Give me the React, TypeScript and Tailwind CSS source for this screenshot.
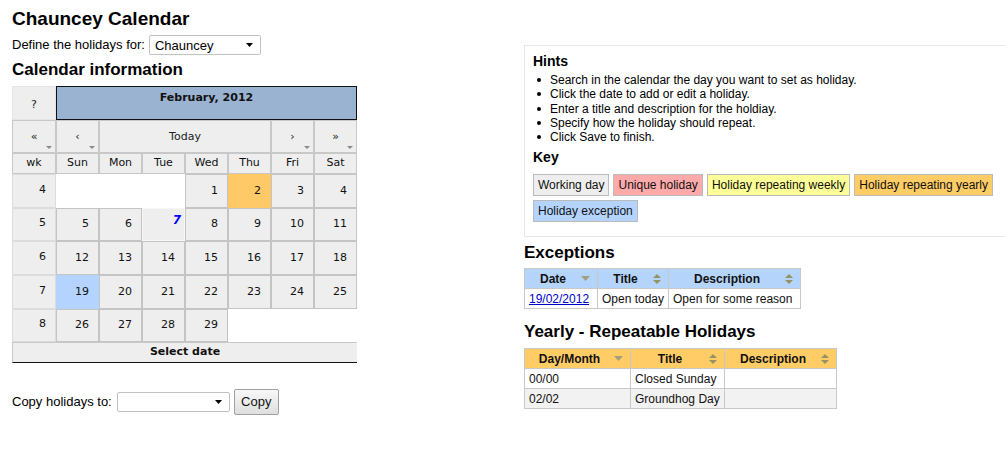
import React from 'react';

const sans = 'font-["Liberation_Sans",Arial,sans-serif]';

function FakeSelect({ value, width }: { value: string; width: string }) {
  return (
    <div className={`${width} h-[20px] border border-[#c2c2c2] rounded-[2px] bg-white flex items-center pl-[5px] pr-[7px]`}>
      <span className="flex-1 text-[13px] leading-none text-black">{value}</span>
      <svg width="7" height="4" viewBox="0 0 7 4">
        <path d="M0 0h7L3.5 4z" fill="#000" />
      </svg>
    </div>
  );
}

function NavCell({ label, span }: { label: string; span?: boolean }) {
  return (
    <div
      className={`relative bg-[#eeeeee] border border-[#c8c8c8] flex items-center justify-center pt-[2px] text-[11px] text-[#222] ${
        span ? 'col-span-4' : ''
      }`}
    >
      {label}
      {!span && (
        <svg className="absolute right-[3px] bottom-[3px]" width="6" height="3" viewBox="0 0 6 3">
          <path d="M0 0h6L3 3z" fill="#8a8a8a" />
        </svg>
      )}
    </div>
  );
}

type Day = { n?: number; kind?: 'plain' | 'yearly' | 'exception' | 'today' };

function DayCell({ d }: { d: Day }) {
  if (!d.n) return <div className="bg-white" />;
  if (d.kind === 'today') {
    return (
      <div className="bg-[#eeeeee] border border-[#f7f7f7] flex items-start justify-end pt-[2px] pr-[3px] text-[12px] font-bold italic text-[#0000ff]">
        {d.n}
      </div>
    );
  }
  const bg = d.kind === 'yearly' ? 'bg-[#fec966] border-[#fec966]' : d.kind === 'exception' ? 'bg-[#b4d4ff] border-[#b4d4ff]' : 'bg-[#eeeeee] border-[#c4c4c4]';
  return (
    <div className={`${bg} border flex items-center justify-end pr-[9px] text-[11px] text-[#111]`}>
      {d.n}
    </div>
  );
}

function Calendar() {
  const weeks: { wk: number; days: Day[] }[] = [
    { wk: 4, days: [{}, {}, {}, { n: 1 }, { n: 2, kind: 'yearly' }, { n: 3 }, { n: 4 }] },
    { wk: 5, days: [{ n: 5 }, { n: 6 }, { n: 7, kind: 'today' }, { n: 8 }, { n: 9 }, { n: 10 }, { n: 11 }] },
    { wk: 6, days: [{ n: 12 }, { n: 13 }, { n: 14 }, { n: 15 }, { n: 16 }, { n: 17 }, { n: 18 }] },
    { wk: 7, days: [{ n: 19, kind: 'exception' }, { n: 20 }, { n: 21 }, { n: 22 }, { n: 23 }, { n: 24 }, { n: 25 }] },
    { wk: 8, days: [{ n: 26 }, { n: 27 }, { n: 28 }, { n: 29 }, {}, {}, {}] },
  ];
  const names = ['Sun', 'Mon', 'Tue', 'Wed', 'Thu', 'Fri', 'Sat'];

  return (
    <div
      className={`mt-[6px] w-[346px] grid grid-cols-[44px_repeat(7,43px)] grid-rows-[34px_33px_21px_34px_33px_34px_34px_33px_21px] font-["DejaVu_Sans",Verdana,sans-serif]`}
    >
      <div className="bg-[#eeeeee] border border-[#e4e4e4] flex items-center justify-center pt-[4px] text-[11px] text-[#222]">?</div>
      <div className="col-span-7 bg-[#99b3d1] border border-[#111] flex justify-center pt-[3px] text-[11px] font-bold text-[#111]">
        February, 2012
      </div>

      <NavCell label="«" />
      <NavCell label="‹" />
      <NavCell label="Today" span />
      <NavCell label="›" />
      <NavCell label="»" />

      <div className="bg-[#eeeeee] border border-[#c8c8c8] flex items-center justify-center text-[11px] text-[#111]">wk</div>
      {names.map((n) => (
        <div key={n} className="bg-[#eeeeee] border border-[#c8c8c8] flex items-center justify-center text-[11px] text-[#111]">
          {n}
        </div>
      ))}

      {weeks.map((w) => (
        <React.Fragment key={w.wk}>
          <div className="bg-[#eeeeee] border border-[#dcdcdc] flex items-center justify-end pr-[9px] pb-[2px] text-[11px] text-[#111]">
            {w.wk}
          </div>
          {w.days.map((d, i) => (
            <DayCell key={i} d={d} />
          ))}
        </React.Fragment>
      ))}

      <div className="col-span-8 bg-[#eeeeee] border-l border-t border-[#c8c8c8] border-b border-b-[#111] flex items-center justify-center text-[11px] font-bold text-[#111]">
        Select date
      </div>
    </div>
  );
}

function SortDown() {
  return (
    <svg width="9" height="5" viewBox="0 0 9 5">
      <path d="M0 0h9L4.5 5z" fill="#a3a07c" />
    </svg>
  );
}

function SortBoth() {
  return (
    <svg width="8" height="10" viewBox="0 0 8 10">
      <path d="M0 4h8L4 0z M0 6h8L4 10z" fill="#959265" />
    </svg>
  );
}

function Th({ label, down, bg }: { label: string; down?: boolean; bg: string }) {
  return (
    <div className={`${bg} border-r border-b border-[#c8c8c8] flex items-center pr-[7px] text-[12px] font-bold text-[#111]`}>
      <span className="flex-1 text-center">{label}</span>
      {down ? <SortDown /> : <SortBoth />}
    </div>
  );
}

function Td({ children, bg = 'bg-white' }: { children?: React.ReactNode; bg?: string }) {
  return (
    <div className={`${bg} border-r border-b border-[#c8c8c8] flex items-center px-[4px] text-[12px] text-[#111] whitespace-nowrap`}>
      {children}
    </div>
  );
}

const keys = [
  { label: 'Working day', bg: 'bg-[#eeeeee]' },
  { label: 'Unique holiday', bg: 'bg-[#ffaaaa]' },
  { label: 'Holiday repeating weekly', bg: 'bg-[#ffff99]' },
  { label: 'Holiday repeating yearly', bg: 'bg-[#ffcc66]' },
  { label: 'Holiday exception', bg: 'bg-[#b4d4ff]' },
];

const hints = [
  'Search in the calendar the day you want to set as holiday.',
  'Click the date to add or edit a holiday.',
  'Enter a title and description for the holdiay.',
  'Specify how the holiday should repeat.',
  'Click Save to finish.',
];

export default function App() {
  return (
    <div className={`${sans} w-[1005px] h-[463px] bg-white text-black flex overflow-hidden`}>
      <div className="w-[524px] shrink-0 pl-[12px] flex flex-col">
        <h1 className="mt-[8px] text-[19px] leading-[22px] font-bold">Chauncey Calendar</h1>
        <div className="mt-[5px] flex items-center gap-[4px] text-[13px]">
          <span>Define the holidays for:</span>
          <FakeSelect value="Chauncey" width="w-[112px]" />
        </div>
        <h2 className="mt-[5px] text-[17px] leading-[20px] font-bold">Calendar information</h2>
        <Calendar />
        <div className="mt-[26px] h-[26px] flex items-center text-[13px]">
          <span>Copy holidays to:</span>
          <div className="ml-[5px]">
            <FakeSelect value="" width="w-[113px]" />
          </div>
          <button className="ml-[4px] h-[26px] w-[45px] border border-[#a0a0a0] rounded-[2px] bg-gradient-to-b from-[#f8f8f8] to-[#dedede] text-[13px] text-[#111]">
            Copy
          </button>
        </div>
      </div>

      <div className="flex-1 min-w-0 pt-[45px]">
        <div className="w-[500px] border border-[#e6e6e6] pl-[8px] pt-[6px] pb-[14px]">
          <div className="text-[14px] leading-[18px] font-bold">Hints</div>
          <ul className="mt-[3px] text-[12px] leading-[14.3px]">
            {hints.map((h) => (
              <li key={h} className="flex items-center">
                <span className="w-[4px] h-[4px] rounded-full bg-black ml-[4px] mr-[9px]" />
                {h}
              </li>
            ))}
          </ul>
          <div className="mt-[4px] text-[14px] leading-[18px] font-bold">Key</div>
          <div className="mt-[8px] w-[465px] flex flex-wrap gap-x-[4px] gap-y-[4px]">
            {keys.map((k) => (
              <div key={k.label} className={`${k.bg} h-[22px] border border-[#bbbbbb] px-[4px] flex items-center text-[12px] text-[#111]`}>
                {k.label}
              </div>
            ))}
          </div>
        </div>

        <h2 className="mt-[6px] text-[17px] leading-[20px] font-bold">Exceptions</h2>
        <div className="mt-[5px] w-[277px] grid grid-cols-[73px_71px_132px] grid-rows-[20px_20px] border-l border-t border-[#c8c8c8]">
          <Th label="Date" down bg="bg-[#b4d4fc]" />
          <Th label="Title" bg="bg-[#b4d4fc]" />
          <Th label="Description" bg="bg-[#b4d4fc]" />
          <Td>
            <a href="#" className="text-[#0000cc] underline">19/02/2012</a>
          </Td>
          <Td>Open today</Td>
          <Td>Open for some reason</Td>
        </div>

        <h2 className="mt-[13px] text-[17px] leading-[20px] font-bold">Yearly - Repeatable Holidays</h2>
        <div className="mt-[6px] w-[313px] grid grid-cols-[106px_94px_112px] grid-rows-[20px_20px_20px] border-l border-t border-[#c8c8c8]">
          <Th label="Day/Month" down bg="bg-[#ffcc66]" />
          <Th label="Title" bg="bg-[#ffcc66]" />
          <Th label="Description" bg="bg-[#ffcc66]" />
          <Td>00/00</Td>
          <Td>Closed Sunday</Td>
          <Td />
          <Td bg="bg-[#f2f2f2]">02/02</Td>
          <Td bg="bg-[#f2f2f2]">Groundhog Day</Td>
          <Td bg="bg-[#f2f2f2]" />
        </div>
      </div>
    </div>
  );
}
